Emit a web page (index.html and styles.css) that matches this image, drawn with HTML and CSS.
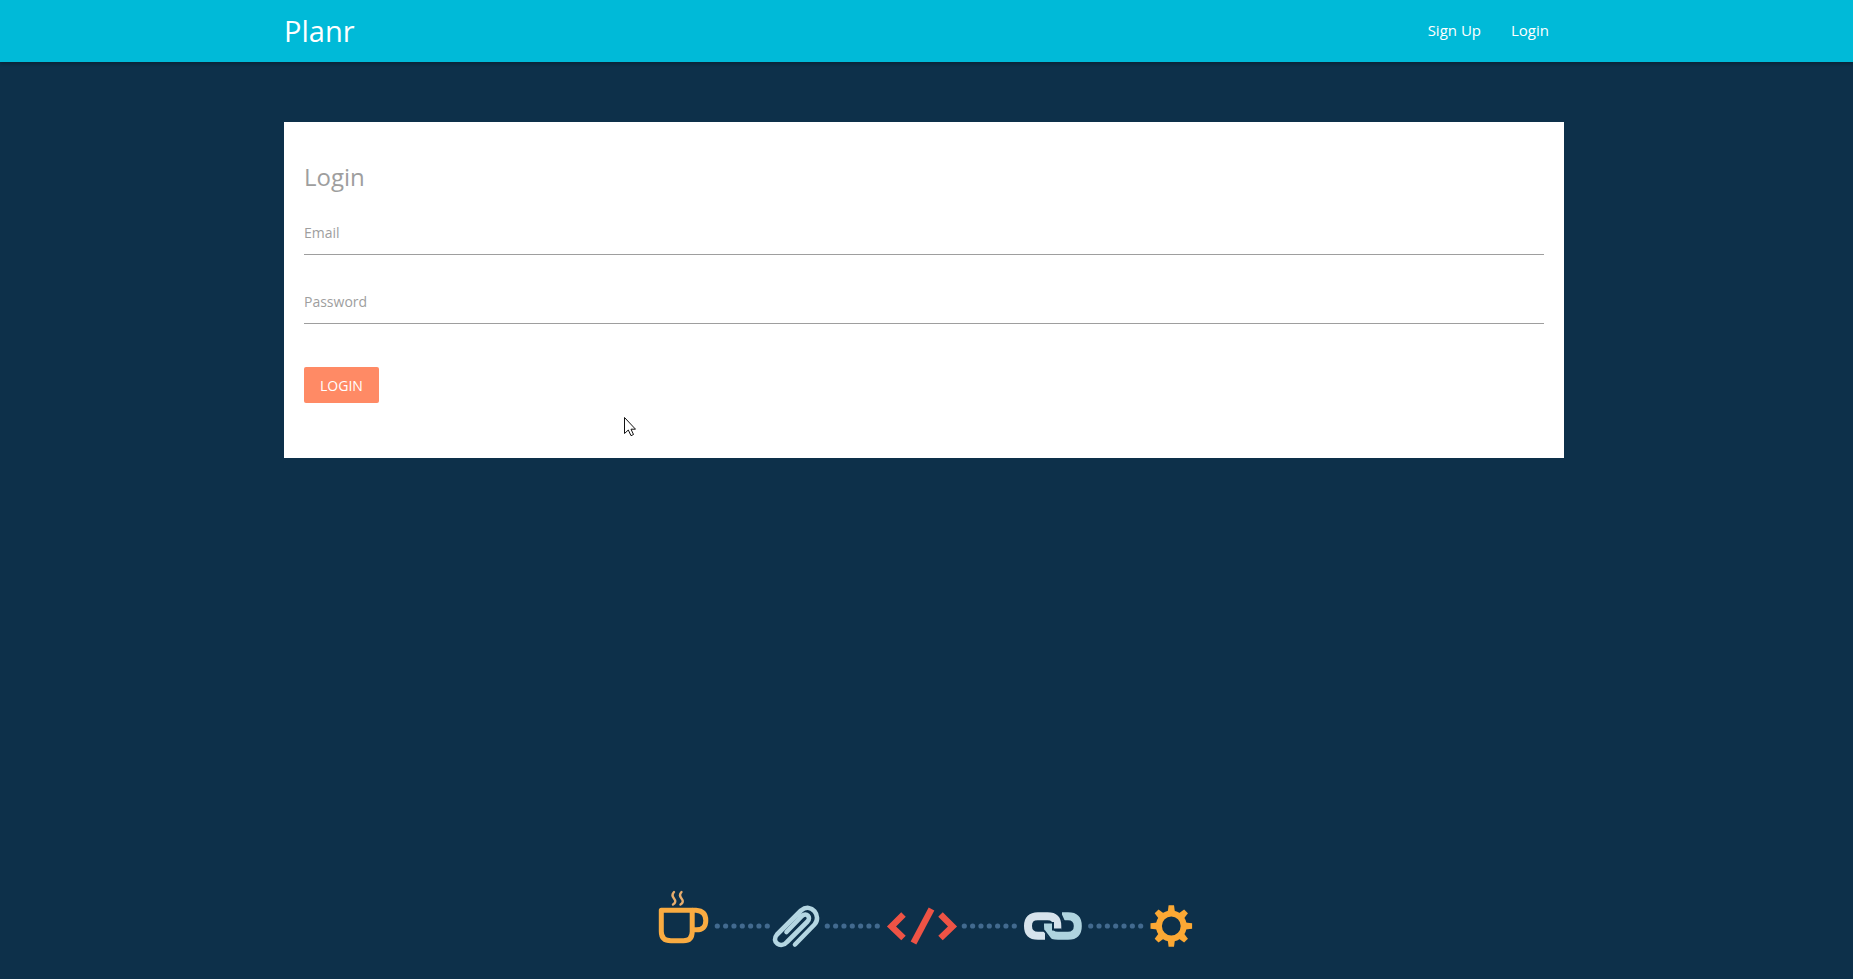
FILE: index.html
```html
<!DOCTYPE html>
<html lang="en">
<head>
<meta charset="utf-8">
<title>Planr</title>
<link rel="stylesheet" href="styles.css">
</head>
<body>
<header class="navbar">
  <div class="container navbar-inner">
    <a class="brand" href="#">Planr</a>
    <nav class="nav-links">
      <a class="nav-link" href="#">Sign Up</a>
      <a class="nav-link" href="#">Login</a>
    </nav>
  </div>
</header>
<main class="content">
  <form class="container card">
    <h1 class="card-title">Login</h1>
    <div class="field">
      <label class="field-label" for="email">Email</label>
      <input class="field-input" id="email" type="email">
    </div>
    <div class="field">
      <label class="field-label" for="password">Password</label>
      <input class="field-input" id="password" type="password">
    </div>
    <button class="button" type="submit">LOGIN</button>
  </form>
</main>
<footer class="footer">
  <svg class="artwork" viewBox="650 885 548 64" aria-hidden="true">
    <g fill="none" stroke="#f9ab41" stroke-width="5" stroke-linejoin="round">
      <path d="M661.300 910.300H692.200V931.500Q692.200 940.800 683.500 940.800H671Q661.300 940.800 661.300 931.500Z"/>
      <path d="M692.200 910.300H696Q705.800 911 705.800 920.500T696 929.800H692.200"/>
      <path d="M674 892q-3 3 0 6.500t-1 6M681.500 892q-3 3 0 6.500t-1 6" stroke="#e9ad6c" stroke-width="2.400" stroke-linecap="round"/>
    </g>
    <g fill="none" stroke="#426a8f" stroke-width="5.200" stroke-linecap="round" stroke-dasharray="0 8.330">
      <path d="M717.300 926H767.400M827.300 926H877.400M964.300 926H1014.400M1090.700 926H1140.800"/>
    </g>
    <path d="M795 944.500L814.500 924.500C822 916.500 811.500 902 801 910.500L777 934.500C770.500 942 781 949 787 942L807.500 921.500C811.500 917 806.500 912 802 916L786.500 932" fill="none" stroke="#b4d6e2" stroke-width="4.600" stroke-linecap="round" stroke-linejoin="round"/>
    <g fill="none" stroke="#ee5345" stroke-width="6.400">
      <path d="M903.500 914.500L891.500 926.500L903.500 938M940.500 914.500L952.500 926.500L940.500 938"/>
      <path d="M931.500 909L913.500 943"/>
    </g>
    <g fill="none" stroke-width="8">
      <path d="M1045 935.800H1038Q1028 935.800 1028 926T1038 916.300H1047.500Q1057.300 916.300 1057.300 926V929.500" stroke="#d7e3ec"/>
      <path d="M1062 916.300H1068Q1077.800 916.300 1077.800 926T1068 935.800H1058Q1048 935.800 1048 926V923.500" stroke="#afd4df"/>
      <path d="M1044 930.500L1052 941M1053 922V929.500H1061.500M1059 910.500L1064 921.500" stroke="#0d304a" stroke-width="2"/>
    </g>
    <g transform="translate(1171.300 926)">
      <circle r="12.400" fill="none" stroke="#fba834" stroke-width="6"/>
      <g fill="#fba834">
        <path id="tooth" d="M-3.600-14L-2.700-20.800H2.700L3.600-14Z"/>
        <use href="#tooth" transform="rotate(45)"/><use href="#tooth" transform="rotate(90)"/>
        <use href="#tooth" transform="rotate(135)"/><use href="#tooth" transform="rotate(180)"/>
        <use href="#tooth" transform="rotate(225)"/><use href="#tooth" transform="rotate(270)"/>
        <use href="#tooth" transform="rotate(315)"/>
      </g>
    </g>
  </svg>
</footer>
<svg class="cursor" viewBox="0 0 12 20" aria-hidden="true">
  <path d="M.5 .5V16.500L4.300 13L7 18.700L9.500 17.500L7 12.200H11.500Z" fill="#fff" stroke="#111"/>
</svg>
</body>
</html>
```
FILE: styles.css
```css
* { box-sizing: border-box; }

body {
  margin: 0;
  min-height: 100vh;
  display: flex;
  flex-direction: column;
  background: #0d304a;
  color: #9e9e9e;
  font-family: "Segoe UI", "Open Sans", "Noto Sans", sans-serif;
  font-size: 14px;
}

.container {
  width: 70%;
  max-width: 1280px;
  margin: 0 auto;
}

.navbar,
.content,
.footer { padding-right: 5px; }

.navbar {
  background: #00bad8;
  box-shadow: 0 2px 3px rgba(0, 0, 0, 0.25);
}

.navbar-inner {
  height: 62px;
  display: flex;
  align-items: center;
  justify-content: space-between;
}

.brand {
  color: #fff;
  font-size: 29px;
  line-height: 60px;
  text-decoration: none;
}

.nav-links {
  display: flex;
  line-height: 60px;
  padding-bottom: 2px;
}

.nav-link {
  padding: 0 15px;
  color: #fff;
  font-size: 15px;
  text-decoration: none;
}

.content { padding-top: 60px; }

.card {
  padding: 35px 20px 55px;
  background: #fff;
}

.card-title {
  margin: 0 0 17px;
  font-size: 24px;
  font-weight: 400;
  line-height: 40px;
}

.field {
  position: relative;
  height: 45px;
  margin-bottom: 24px;
}

.field-label {
  position: absolute;
  top: 9px;
  left: 0;
}

.field-input {
  display: block;
  width: 100%;
  height: 41px;
  padding: 0;
  border: 0;
  border-bottom: 1px solid #9e9e9e;
  background: transparent;
  font: inherit;
  outline: 0;
}

.button {
  display: block;
  height: 36px;
  margin-top: 39px;
  padding: 0 16px;
  border: 0;
  border-radius: 2px;
  background: #ff8a65;
  color: #fff;
  font: inherit;
}

.footer {
  margin-top: auto;
  padding-bottom: 30px;
  display: flex;
  justify-content: center;
}

.artwork { width: 548px; height: 64px; }

.cursor {
  position: absolute;
  left: 624px;
  top: 417px;
  width: 12px;
  height: 20px;
}
```
